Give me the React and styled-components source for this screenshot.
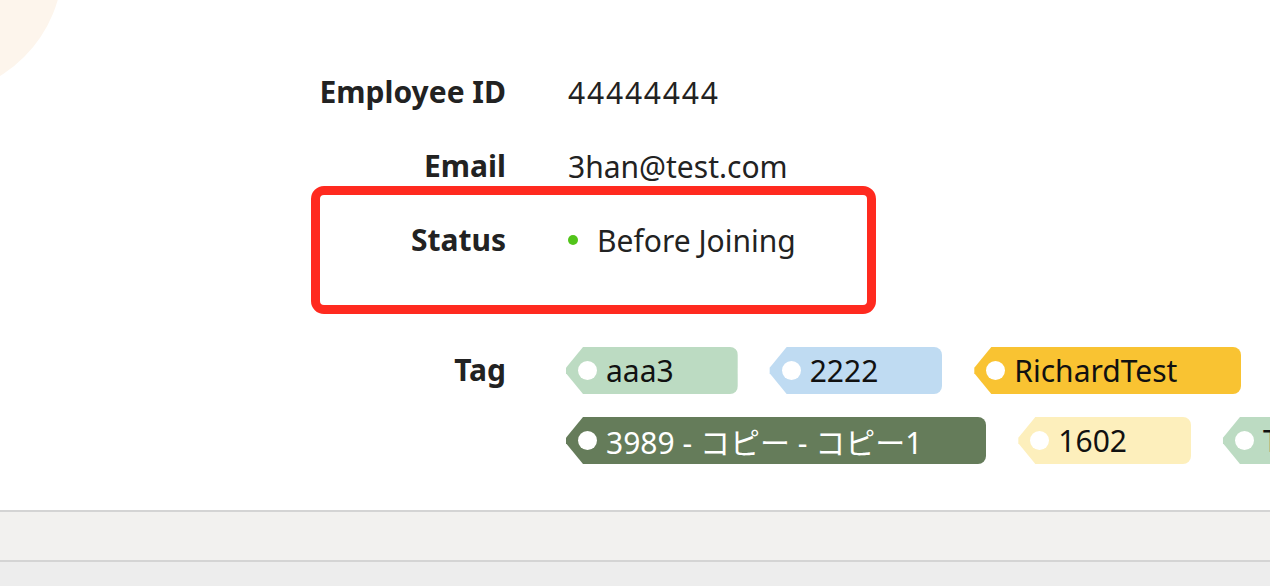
import React from 'react';
import styled, { createGlobalStyle } from 'styled-components';

const GlobalStyle = createGlobalStyle`
  html, body {
    margin: 0;
    padding: 0;
    background: #ffffff;
  }
  body {
    font-family: "Noto Sans", "Noto Sans CJK JP", sans-serif;
    color: #222222;
  }
`;

const employee = {
  id: '44444444',
  email: '3han@test.com',
  status: 'Before Joining',
};

const tags = [
  { name: 'aaa3', bg: '#bcdbc2', fg: '#111111' },
  { name: '2222', bg: '#bfdbf2', fg: '#111111' },
  { name: 'RichardTest', bg: '#f9c332', fg: '#111111' },
  { name: '3989 - コピー - コピー1', bg: '#657c5a', fg: '#ffffff' },
  { name: '1602', bg: '#fdefbc', fg: '#111111' },
  { name: 'Test', bg: '#bcdbc2', fg: '#111111' },
];

function App() {
  return (
    <>
      <GlobalStyle />
      <Page>
        <Blob />
        <Details>
          <Row>
            <Label>Employee ID</Label>
            <Value $digits>{employee.id}</Value>
          </Row>
          <Row>
            <Label>Email</Label>
            <Value>{employee.email}</Value>
          </Row>
          <StatusRow>
            <Label>Status</Label>
            <Value>
              <Dot />
              {employee.status}
            </Value>
            <Highlight />
          </StatusRow>
          <TagRow>
            <Label>Tag</Label>
            <TagList>
              {tags.map((t) => (
                <Tag key={t.name} $bg={t.bg} $fg={t.fg}>
                  <Hole />
                  {t.name}
                </Tag>
              ))}
            </TagList>
          </TagRow>
        </Details>
        <Footer>
          <FooterBand />
          <FooterBase />
        </Footer>
      </Page>
    </>
  );
}

//Styled-components
const Page = styled.div`
  position: relative;
  width: 1270px;
  height: 586px;
  overflow: hidden;
  display: flex;
  flex-direction: column;
`;

const Blob = styled.div`
  position: absolute;
  left: -203px;
  top: -170px;
  width: 266px;
  height: 266px;
  border-radius: 50%;
  background: #fdf5ec;
`;

const Details = styled.div`
  flex: 1;
  display: flex;
  flex-direction: column;
  padding-top: 70px;
  padding-left: 306px;
`;

const Row = styled.div`
  display: flex;
  align-items: center;
  height: 44px;
  margin-bottom: 30px;
`;

const StatusRow = styled(Row)`
  position: relative;
  margin-bottom: 86px;
`;

const TagRow = styled.div`
  display: flex;
  align-items: flex-start;
`;

const Label = styled.div`
  width: 200px;
  flex-shrink: 0;
  text-align: right;
  font-size: 30px;
  font-weight: 700;
  color: #222222;
  line-height: 44px;
  margin-right: 62px;
`;

const Value = styled.div`
  display: flex;
  align-items: center;
  font-size: 30px;
  letter-spacing: ${(p) => (p.$digits ? '1.8px' : '0')};
  color: #222222;
  white-space: nowrap;
`;

const Dot = styled.span`
  width: 10px;
  height: 10px;
  border-radius: 50%;
  background: #52c41a;
  margin-right: 19px;
`;

const Highlight = styled.div`
  position: absolute;
  left: 5px;
  top: -32px;
  width: 565px;
  height: 128px;
  box-sizing: border-box;
  border: 9px solid #ff2a1f;
  border-radius: 13px;
  pointer-events: none;
`;

const TagList = styled.div`
  width: 1000px;
  flex-shrink: 0;
  display: flex;
  flex-wrap: wrap;
  column-gap: 31px;
  row-gap: 23px;
  margin-left: -3px;
  margin-top: -1px;
`;

const Tag = styled.div`
  display: flex;
  align-items: center;
  height: 47px;
  padding: 0 64px 0 13px;
  background: ${(p) => p.$bg};
  color: ${(p) => p.$fg};
  font-size: 30px;
  white-space: nowrap;
  border-radius: 8px;
  clip-path: polygon(18px 0, 100% 0, 100% 100%, 18px 100%, 1px 56%, 1px 44%);
`;

const Hole = styled.span`
  width: 19px;
  height: 19px;
  border-radius: 50%;
  background: #ffffff;
  margin-right: 9px;
  flex-shrink: 0;
`;

const Footer = styled.div`
  display: flex;
  flex-direction: column;
`;

const FooterBand = styled.div`
  height: 48px;
  background: #f2f1ef;
  border-top: 2px solid #d4d4d4;
  border-bottom: 2px solid #d4d4d4;
`;

const FooterBase = styled.div`
  height: 24px;
  background: #ededed;
`;

export default App;
